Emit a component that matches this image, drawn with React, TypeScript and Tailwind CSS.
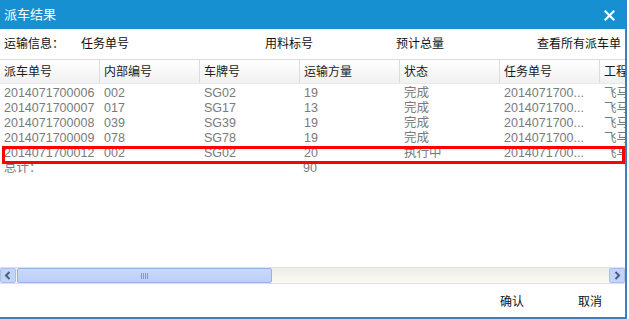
import React from "react";

const cols = ["派车单号", "内部编号", "车牌号", "运输方量", "状态", "任务单号", "工程"];
const rows = [
  ["2014071700006", "002", "SG02", "19", "完成", "2014071700...", "飞马"],
  ["2014071700007", "017", "SG17", "13", "完成", "2014071700...", "飞马"],
  ["2014071700008", "039", "SG39", "19", "完成", "2014071700...", "飞马"],
  ["2014071700009", "078", "SG78", "19", "完成", "2014071700...", "飞马"],
  ["2014071700012", "002", "SG02", "20", "执行中", "2014071700...", "飞马"],
];

const font = { fontFamily: '"Liberation Sans", "Noto Sans CJK SC", sans-serif' };

export default function App() {
  return (
    <div className="w-[629px] h-[319px] bg-white overflow-hidden" style={font}>
      <div className="w-[627px] h-[319px] flex flex-col border-r-2 border-b-2 border-[#3a7fc2]">
        {/* title */}
        <div className="h-[29px] shrink-0 bg-[#1690d0] flex items-center justify-between pl-[4px] pr-[10px] text-white text-[13px]">
          <span>派车结果</span>
          <svg width="11" height="11" viewBox="0 0 11 11" className="mt-[2px]">
            <path d="M1.5 1.5 L9.5 9.5 M9.5 1.5 L1.5 9.5" stroke="white" strokeWidth="2.2" strokeLinecap="square" />
          </svg>
        </div>
        {/* info row */}
        <div className="h-[30px] shrink-0 flex items-center pl-[4px] text-[12px] text-[#111] whitespace-nowrap">
          <span className="w-[77px]">运输信息：</span>
          <span className="w-[184px]">任务单号</span>
          <span className="w-[131px]">用料标号</span>
          <span className="w-[141px]">预计总量</span>
          <span>查看所有派车单</span>
        </div>
        {/* grid */}
        <div className="relative h-[208px] shrink-0 overflow-hidden border-t border-[#dedede]">
          <div className="flex h-[24px] w-[700px] bg-gradient-to-b from-white to-[#f1f1f1] border-b border-[#e8e8e8]">
            {cols.map((c) => (
              <div key={c} className="w-[100px] shrink-0 border-r border-[#dcdcdc] pl-[4px] flex items-center text-[12px] text-[#1a1a1a] whitespace-nowrap">
                {c}
              </div>
            ))}
          </div>
          <div className="mt-[2px] text-[12.5px] text-[#7a7a7a]">
            {rows.map((r, i) => (
              <div key={i} className="flex h-[15px] w-[700px] items-center">
                {r.map((v, j) => (
                  <div key={j} className="w-[100px] shrink-0 pl-[4px] whitespace-nowrap leading-none">
                    {v}
                  </div>
                ))}
              </div>
            ))}
            <div className="flex h-[15px] w-[700px] items-center">
              <div className="w-[300px] shrink-0 pl-[4px] leading-none">总计：</div>
              <div className="w-[100px] shrink-0 pl-[3px] leading-none">90</div>
            </div>
          </div>
          <div className="absolute left-[2px] top-[86px] w-[623px] h-[18px] border-[3px] border-[#ff0000]" />
        </div>
        {/* scrollbar */}
        <div className="h-[17px] shrink-0 flex bg-gradient-to-b from-[#eeede5] to-[#fbfaf6] border-y border-[#e2e0d8]">
          <div className="w-[16px] h-full bg-[#c3d4f6] border border-[#a9c0ec] rounded-[2px] flex items-center justify-center">
            <svg width="8" height="9" viewBox="0 0 8 9">
              <path d="M5.5 1 L2 4.5 L5.5 8" stroke="#4a5e86" strokeWidth="2" fill="none" />
            </svg>
          </div>
          <div className="ml-[1px] w-[255px] h-full bg-gradient-to-b from-[#c9d8fa] to-[#bccff7] border border-[#97b2e6] rounded-[2px] flex items-center justify-center gap-[1px]">
            <span className="w-[1px] h-[6px] bg-[#7f9ad0]" />
            <span className="w-[1px] h-[6px] bg-[#7f9ad0]" />
            <span className="w-[1px] h-[6px] bg-[#7f9ad0]" />
            <span className="w-[1px] h-[6px] bg-[#7f9ad0]" />
          </div>
          <div className="flex-1" />
          <div className="w-[16px] h-full bg-[#c3d4f6] border border-[#a9c0ec] rounded-[2px] flex items-center justify-center">
            <svg width="8" height="9" viewBox="0 0 8 9">
              <path d="M2.5 1 L6 4.5 L2.5 8" stroke="#4a5e86" strokeWidth="2" fill="none" />
            </svg>
          </div>
        </div>
        {/* footer */}
        <div className="flex-1 flex items-center justify-end pt-[2px] text-[12px] text-[#111]">
          <span className="mr-[54px]">确认</span>
          <span className="mr-[23px]">取消</span>
        </div>
      </div>
    </div>
  );
}
